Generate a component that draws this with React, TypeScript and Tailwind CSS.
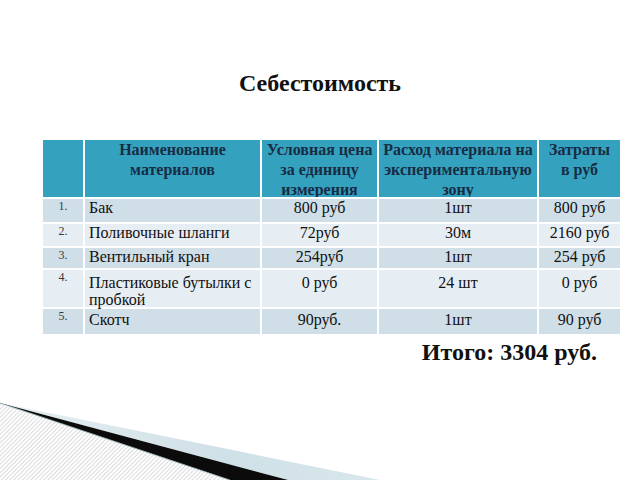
import React from 'react';

type Row = {
  n: string;
  name: React.ReactNode;
  price: string;
  amount: string;
  cost: string;
  h: string;
  pt: string;
  tone: 'dark' | 'light';
};

const rows: Row[] = [
  { n: '1.', name: 'Бак', price: '800 руб', amount: '1шт', cost: '800 руб', h: 'h-[23px]', pt: 'pt-0', tone: 'dark' },
  { n: '2.', name: 'Поливочные шланги', price: '72руб', amount: '30м', cost: '2160 руб', h: 'h-[22px]', pt: 'pt-0', tone: 'light' },
  { n: '3.', name: 'Вентильный кран', price: '254руб', amount: '1шт', cost: '254 руб', h: 'h-[20px]', pt: 'pt-0', tone: 'dark' },
  {
    n: '4.',
    name: (
      <>
        Пластиковые бутылки с
        <br />
        пробкой
      </>
    ),
    price: '0 руб',
    amount: '24 шт',
    cost: '0 руб',
    h: 'h-[37px]',
    pt: 'pt-[4px]',
    tone: 'light',
  },
  { n: '5.', name: 'Скотч', price: '90руб.', amount: '1шт', cost: '90 руб', h: 'h-[25px]', pt: 'pt-[2px]', tone: 'dark' },
];

function Decoration() {
  // bottom-left slide ornament: hatched wedge, black swoosh, light blue band
  return (
    <svg
      className="absolute bottom-0 left-0"
      width="640"
      height="80"
      viewBox="0 0 640 80"
      aria-hidden="true"
    >
      <defs>
        <pattern id="hatch" width="3" height="3" patternUnits="userSpaceOnUse" patternTransform="rotate(45)">
          <rect width="3" height="3" fill="#ffffff" />
          <line x1="0" y1="0" x2="0" y2="3" stroke="#b3b8ba" strokeWidth="1" />
        </pattern>
        <linearGradient id="band" x1="0" y1="0" x2="1" y2="0">
          <stop offset="0" stopColor="#e6eff2" />
          <stop offset="0.6" stopColor="#cfe0e7" />
          <stop offset="1" stopColor="#d9e7ec" />
        </linearGradient>
      </defs>
      <polygon points="0,3 380,80 288,80" fill="url(#band)" />
      <polygon points="0,3 288,80 230,80" fill="#0b0b0b" />
      <polygon points="0,3 230,80 0,80" fill="url(#hatch)" />
      <line x1="0" y1="3" x2="230" y2="80" stroke="#7f9aa3" strokeWidth="0.8" />
    </svg>
  );
}

export default function App() {
  const serif = "font-['Liberation_Serif','Times_New_Roman',serif]";
  const rowBg = (tone: Row['tone']) => (tone === 'dark' ? 'bg-[#d0dee7]' : 'bg-[#e7eef3]');

  return (
    <div className={`relative h-[480px] w-[640px] overflow-hidden bg-white ${serif}`}>
      <h1 className="pt-[68px] text-center text-[24px] leading-[30px] font-bold text-[#111]">
        Себестоимость
      </h1>

      <div className="mt-[42px] ml-[43px] w-[575px]">
        <div className="grid grid-cols-[40px_175px_115px_158px_81px] gap-[2px]">
          {/* header */}
          <div className="h-[57px] bg-[#34a2bf]" />
          {[
            ['Наименование', 'материалов'],
            ['Условная цена', 'за единицу', 'измерения'],
            ['Расход материала на', 'экспериментальную', 'зону'],
            ['Затраты', 'в руб'],
          ].map((lines, i) => (
            <div
              key={i}
              className="h-[57px] overflow-hidden bg-[#34a2bf] text-center text-[16px] leading-[20px] font-bold whitespace-nowrap text-[#182c44]"
            >
              {lines.map((l) => (
                <div key={l}>{l}</div>
              ))}
            </div>
          ))}

          {rows.map((r) => (
            <React.Fragment key={r.n}>
              <div className={`${r.h} ${rowBg(r.tone)} pt-[1px] text-center text-[12px] leading-[12px] text-[#3a3a3a]`}>
                {r.n}
              </div>
              <div className={`${r.h} ${r.pt} ${rowBg(r.tone)} pl-[4px] text-[16px] leading-[17px] whitespace-nowrap text-[#111]`}>
                {r.name}
              </div>
              <div className={`${r.h} ${r.pt} ${rowBg(r.tone)} text-center text-[16px] leading-[17px] text-[#111]`}>
                {r.price}
              </div>
              <div className={`${r.h} ${r.pt} ${rowBg(r.tone)} text-center text-[16px] leading-[17px] text-[#111]`}>
                {r.amount}
              </div>
              <div className={`${r.h} ${r.pt} ${rowBg(r.tone)} text-center text-[16px] leading-[17px] text-[#111]`}>
                {r.cost}
              </div>
            </React.Fragment>
          ))}
        </div>

        <div className="mt-[3px] pr-[21px] text-right text-[24px] leading-[30px] font-bold text-[#111]">
          Итого: 3304 руб.
        </div>
      </div>

      <Decoration />
    </div>
  );
}
